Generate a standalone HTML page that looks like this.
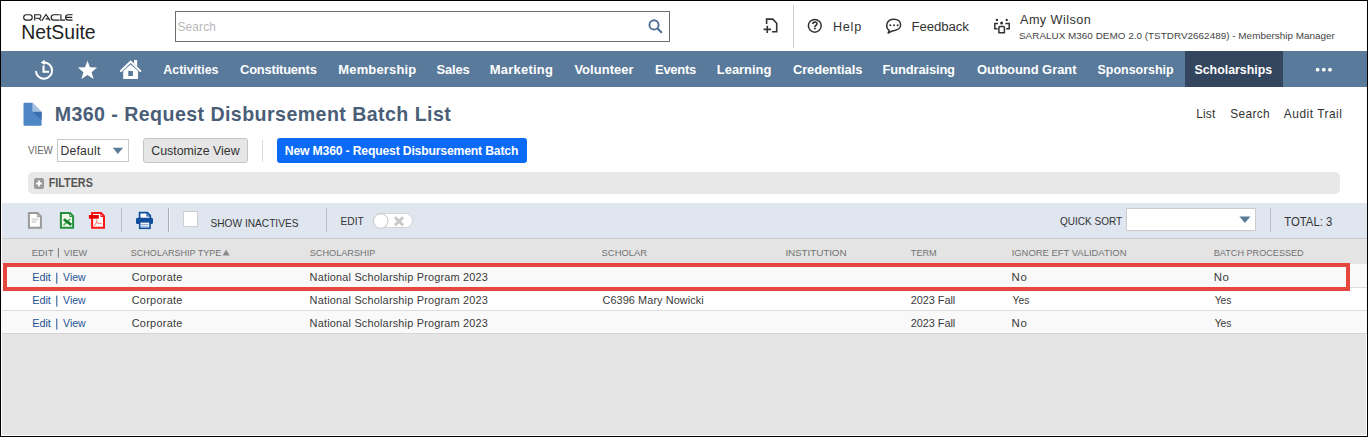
<!DOCTYPE html>
<html><head><meta charset="utf-8">
<style>
html,body{margin:0;padding:0}
body{width:1368px;height:437px;overflow:hidden;position:relative;background:#fff;font-family:"Liberation Sans",sans-serif}
.b{position:absolute;box-sizing:border-box}
svg{position:absolute;left:0;top:0}
svg text{font-family:"Liberation Sans",sans-serif}
</style></head><body>
<!-- frame -->
<div class="b" style="left:0;top:0;width:1368px;height:437px;border:1px solid #000;border-right-width:1px;border-bottom-width:1px;background:#fff"></div>
<!-- search box -->
<div class="b" style="left:175px;top:11px;width:495px;height:31px;border:1px solid #6f6f6f;background:#fff"></div>
<div class="b" style="left:793px;top:5px;width:1px;height:43px;background:#cfcfcf"></div>
<!-- nav -->
<div class="b" style="left:1px;top:51px;width:1366px;height:36px;background:#597a9b"></div>
<div class="b" style="left:1185px;top:51px;width:98px;height:36px;background:#34465d"></div>
<!-- view row -->
<div class="b" style="left:57px;top:139px;width:72px;height:23px;border:1px solid #c9c9c9;background:#fff"></div>
<div class="b" style="left:143px;top:138px;width:105px;height:25px;border:1px solid #c4c4c4;border-radius:3px;background:#e6e6e6"></div>
<div class="b" style="left:262px;top:140px;width:1px;height:22px;background:#dcdcdc"></div>
<div class="b" style="left:277px;top:138px;width:250px;height:25px;border-radius:3px;background:#0b6bf7"></div>
<!-- filters -->
<div class="b" style="left:28px;top:172px;width:1312px;height:22px;border-radius:5px;background:#e8e8e8"></div>
<!-- toolbar -->
<div class="b" style="left:2px;top:203px;width:1365px;height:35px;background:#dfe6ef"></div>
<div class="b" style="left:2px;top:238px;width:1365px;height:1px;background:#c8cacd"></div>
<div class="b" style="left:121px;top:208px;width:1px;height:24px;background:#b9bec5"></div>
<div class="b" style="left:168px;top:208px;width:1px;height:24px;background:#a6acb4"></div>
<div class="b" style="left:169px;top:208px;width:1px;height:24px;background:#f4f6f9"></div>
<div class="b" style="left:183px;top:211px;width:15px;height:16px;border:1px solid #cfcfcf;background:#fff"></div>
<div class="b" style="left:326px;top:208px;width:1px;height:24px;background:#b9bec5"></div>
<div class="b" style="left:373px;top:213px;width:40px;height:15px;border:1px solid #d4d4d4;border-radius:8px;background:#fff"></div>
<div class="b" style="left:1126px;top:208px;width:130px;height:23px;border:1px solid #cccccc;background:#fff"></div>
<div class="b" style="left:1270px;top:208px;width:1px;height:24px;background:#b9bec5"></div>
<!-- list -->
<div class="b" style="left:2px;top:239px;width:1365px;height:25px;background:#e4e4e4"></div>
<div class="b" style="left:2px;top:264px;width:1365px;height:23px;background:#f9f9f9"></div>
<div class="b" style="left:2px;top:287px;width:1365px;height:1px;background:#dddddd"></div>
<div class="b" style="left:2px;top:288px;width:1365px;height:22px;background:#ffffff"></div>
<div class="b" style="left:2px;top:310px;width:1365px;height:1px;background:#dddddd"></div>
<div class="b" style="left:2px;top:311px;width:1365px;height:22px;background:#f9f9f9"></div>
<div class="b" style="left:2px;top:333px;width:1365px;height:1px;background:#d6d6d6"></div>
<div class="b" style="left:2px;top:334px;width:1364px;height:101px;background:#e5e5e5"></div>
<div class="b" style="left:3px;top:263px;width:1347px;height:28px;border:4px solid #e5473f"></div>
<!-- right/bottom black edge -->
<div class="b" style="left:1367px;top:0;width:1px;height:437px;background:#000"></div>
<div class="b" style="left:0;top:436px;width:1368px;height:1px;background:#000"></div>

<svg width="1368" height="437">
<!-- ORACLE logo -->
<g fill="none" stroke="#222" stroke-width="1.15">
 <rect x="23.7" y="14.7" width="8.5" height="5.4" rx="2.7"/>
 <path d="M34.7 20.6 V14.7 H39.2 A1.75 1.75 0 0 1 39.2 18.2 H35.5 M38.6 18.2 L41.2 20.6"/>
 <path d="M41.9 20.6 L46 14.5 L50.1 20.6 M45.6 18.9 H48.6"/>
 <path d="M59.7 14.7 H53.9 A2.7 2.7 0 0 0 53.9 20.1 H59.7"/>
 <path d="M60.9 14.2 V20.1 H65"/>
 <path d="M72.6 14.7 H68.3 A2.7 2.7 0 0 0 68.3 20.1 H72.6 M66.2 17.4 H72.2"/>
</g>
<!-- magnifier -->
<g fill="none" stroke="#4d6f94" stroke-linecap="round">
 <circle cx="654" cy="24.9" r="4.6" stroke-width="1.9"/>
 <path d="M657.6 28.5 L661.3 32.2" stroke-width="2.1"/>
</g>
<!-- new doc -->
<g fill="none" stroke="#333" stroke-width="1.6">
 <path d="M766.6 24 V19.1 H772.8 L776.7 23.2 V31.7 H772"/>
 <path d="M763.6 29.4 H771 M767.3 25.8 V33"/>
</g>
<!-- help -->
<circle cx="814.8" cy="25.8" r="6.4" fill="none" stroke="#333" stroke-width="1.5"/>
<path d="M812.9 24 C812.9 21.6 817 21.4 817 23.7 C817 25.3 814.9 25.4 814.9 26.9" fill="none" stroke="#333" stroke-width="1.6"/><circle cx="814.9" cy="28.5" r="1" fill="#333"/>
<!-- feedback -->
<g fill="none" stroke="#333" stroke-width="1.5" stroke-linejoin="round">
 <path d="M889.2 30.3 C885.2 27.5 885.8 19.2 894 19.2 C902.5 19.2 903 29.6 894.5 30.4 C892.5 30.6 891 31.2 888.2 33 Z"/>
</g>
<g fill="#333"><circle cx="890.3" cy="25.2" r="1"/><circle cx="894" cy="25.2" r="1"/><circle cx="897.7" cy="25.2" r="1"/></g>
<!-- users -->
<g fill="#333"><circle cx="996.9" cy="19.9" r="1.2"/><circle cx="1006.7" cy="19.9" r="1.2"/><circle cx="1001.6" cy="23.1" r="1.5"/></g>
<g fill="none" stroke="#333" stroke-width="1.5">
 <path d="M998 23.6 H994.8 V28.7 H997.6"/><path d="M1005.4 23.6 H1009.2 V28.7 H1006.2"/>
 <path d="M998.9 27.2 L999.9 26.4 H1003.4 L1004.4 27.2 V32.8 H998.9 Z"/>
</g>
<!-- nav icons -->
<g fill="none" stroke="#fff" stroke-width="2">
 <path d="M35.9 71.2 A8.1 8.1 0 1 0 43.6 62.5"/>
 <path d="M43.5 65.5 V71.7 H49.1" stroke-width="2.1"/>
</g>
<path d="M40.6 62.4 L44.9 59.8 L44.9 65 Z" fill="#fff"/>
<path d="M87.5 60.7 L90 67.3 L97.1 67.6 L91.6 72.2 L93.6 78.9 L87.5 75.1 L81.4 78.9 L83.4 72.2 L77.9 67.6 L85 67.3 Z" fill="#fff"/>
<g fill="#fff">
 <path fill-rule="evenodd" d="M123.2 79 V70.9 L130.6 64.4 L138 70.9 V79 Z M128.3 71 H132.9 V75.9 H128.3 Z"/>
 <path d="M134 60.1 H137.2 V66.5 L134 63.4 Z"/>
</g>
<path d="M120.9 71 L130.6 61.6 L140.3 71" fill="none" stroke="#fff" stroke-width="2" stroke-linecap="round"/>
<g fill="#fff"><circle cx="1317.6" cy="69.7" r="1.9"/><circle cx="1323.8" cy="69.7" r="1.9"/><circle cx="1330" cy="69.7" r="1.9"/></g>
<!-- title doc icon -->
<path d="M24.5 102.8 H32.4 L41.6 112 V124.8 Q41.6 125.8 40.6 125.8 H24.5 Q23.5 125.8 23.5 124.8 V103.8 Q23.5 102.8 24.5 102.8 Z" fill="#4f86c6"/>
<path d="M32.4 111.7 H41.6 V120 Z" fill="#3d6fae"/>
<path d="M32.4 102.8 V111.7 H41.6 Z" fill="#a6c0e2"/>
<!-- view dropdown arrow -->
<path d="M112.8 147.8 H123 L117.9 153.9 Z" fill="#5b7a98"/>
<!-- filters plus -->
<rect x="34" y="178" width="10" height="11" rx="2" fill="#9a9a9a"/>
<path d="M36.2 183.5 H41.8 M39 180.6 V186.4" stroke="#fff" stroke-width="1.8"/>
<!-- toolbar icons -->
<g stroke-width="2" stroke-linejoin="miter">
 <path d="M28.9 212.9 H37.5 L40.9 216.4 V227.8 H28.9 Z" fill="#fff" stroke="#9a9a9a"/>
 <path d="M37.3 213.5 V216.7 H40.4 Z" fill="#f2f2f2" stroke="#9a9a9a" stroke-width="1"/>
 <path d="M31.6 219.4 H38 M31.6 222 H36.2" stroke="#dcdcdc" stroke-width="2.2"/>
 <path d="M60.9 212.9 H70 L73.1 216.2 V227.8 H60.9 Z" fill="#eff8e9" stroke="#25903f"/>
 <path d="M69.8 213.5 V216.5 H72.6 Z" fill="#fff" stroke="#25903f" stroke-width="1"/>
 <path d="M70.3 219 L63.6 225.2" stroke="#4cb55a" stroke-width="1.7"/>
 <path d="M63.8 219.2 L71.3 224.9" stroke="#137a2c" stroke-width="2.6"/>
 <path d="M92.1 212.9 H101 L104 216.2 V227.8 H92.1 Z" fill="#fff" stroke="#ff1414"/>
 <path d="M100.8 213.5 V216.5 H103.5 Z" fill="#fff" stroke="#ff1414" stroke-width="1"/>
 <rect x="88.9" y="215" width="9.9" height="3.7" fill="#e80000" stroke="none"/>
 <path d="M96.8 219.5 C97.3 222 95.5 224.6 93.8 226 M97 223 C98.5 223.3 100.2 223.2 101.6 223.5" fill="none" stroke="#ff5050" stroke-width="0.9"/>
</g>
<g>
 <path d="M139.6 212.7 H147.4 L150.3 215.6 V219 H139.6 Z" fill="#fff" stroke="#0f4d9d" stroke-width="1.7"/><path d="M147 213 V216 H150" fill="none" stroke="#0f4d9d" stroke-width="1.2"/>
 <rect x="136" y="217.8" width="17" height="6.3" rx="1.5" fill="#0f4d9d"/>
 <rect x="139.7" y="221.8" width="10.3" height="6.5" fill="#fff" stroke="#0f4d9d" stroke-width="1.6"/>
 <path d="M141 224.4 H148.5 M141 226.3 H148.5" stroke="#6a8fc2" stroke-width="0.8"/>
</g>
<!-- toggle -->
<circle cx="380.7" cy="221" r="7.3" fill="#fff" stroke="#c6c6c6" stroke-width="1"/>
<path d="M395 217.3 L403 225.3 M403 217.3 L395 225.3" stroke="#c8c8c8" stroke-width="3"/>
<!-- quick sort arrow -->
<path d="M1239.4 216.6 H1250.4 L1244.9 223 Z" fill="#5b7a98"/>
<!-- header sort arrow -->
<path d="M222.6 255.6 L226.1 249.6 L229.6 255.6 Z" fill="#8a8a8a"/>
<path d="M56.8 295.6 V306.6 M56.8 272.7 V283.7 M56.8 318.6 V329.6" stroke="#1f5394" stroke-width="1"/>
<path d="M58.4 248.2 V257.6" stroke="#777" stroke-width="1"/>
<text transform="translate(21.14 39.0) scale(0.9286 1)" font-weight="normal" font-size="20.93" fill="#1f1f1f">NetSuite</text>
<text x="177.40" y="30.7" font-weight="normal" font-size="11.92" letter-spacing="0.160" fill="#b9b9b9">Search</text>
<text x="833.00" y="30.7" font-weight="normal" font-size="12.65" letter-spacing="0.733" fill="#333333">Help</text>
<text x="911.40" y="31.1" font-weight="normal" font-size="13.23" letter-spacing="-0.071" fill="#333333">Feedback</text>
<text x="1020.00" y="24.0" font-weight="normal" font-size="12.65" letter-spacing="0.444" fill="#333333">Amy Wilson</text>
<text x="1019.00" y="39.0" font-weight="normal" font-size="9.88" letter-spacing="0.028" fill="#444444">SARALUX M360 DEMO 2.0 (TSTDRV2662489) - Membership Manager</text>
<text transform="translate(163.30 74.1) scale(0.9596 1)" font-weight="bold" font-size="12.94" fill="#ffffff">Activities</text>
<text x="240.00" y="74.1" font-weight="bold" font-size="12.94" letter-spacing="-0.200" fill="#ffffff">Constituents</text>
<text x="338.30" y="74.1" font-weight="bold" font-size="12.94" letter-spacing="0.189" fill="#ffffff">Membership</text>
<text x="436.50" y="74.1" font-weight="bold" font-size="12.94" letter-spacing="-0.150" fill="#ffffff">Sales</text>
<text x="489.80" y="74.1" font-weight="bold" font-size="12.94" letter-spacing="0.250" fill="#ffffff">Marketing</text>
<text x="574.40" y="74.1" font-weight="bold" font-size="12.94" letter-spacing="0.062" fill="#ffffff">Volunteer</text>
<text x="655.00" y="74.1" font-weight="bold" font-size="12.94" letter-spacing="-0.240" fill="#ffffff">Events</text>
<text x="716.80" y="74.1" font-weight="bold" font-size="12.94" letter-spacing="0.000" fill="#ffffff">Learning</text>
<text x="792.90" y="74.1" font-weight="bold" font-size="12.94" letter-spacing="-0.100" fill="#ffffff">Credentials</text>
<text x="882.60" y="74.1" font-weight="bold" font-size="12.94" letter-spacing="-0.160" fill="#ffffff">Fundraising</text>
<text x="977.00" y="74.1" font-weight="bold" font-size="12.94" letter-spacing="-0.031" fill="#ffffff">Outbound Grant</text>
<text transform="translate(1097.54 74.1) scale(0.9641 1)" font-weight="bold" font-size="12.94" fill="#ffffff">Sponsorship</text>
<text transform="translate(1194.44 74.1) scale(0.9575 1)" font-weight="bold" font-size="12.94" fill="#ffffff">Scholarships</text>
<text x="54.70" y="121.0" font-weight="bold" font-size="19.62" letter-spacing="0.427" fill="#4a5e78">M360 - Request Disbursement Batch List</text>
<text x="1196.20" y="118.0" font-weight="normal" font-size="11.92" letter-spacing="0.200" fill="#333333">List</text>
<text x="1230.20" y="118.0" font-weight="normal" font-size="11.92" letter-spacing="0.340" fill="#333333">Search</text>
<text x="1283.80" y="118.0" font-weight="normal" font-size="11.92" letter-spacing="0.520" fill="#333333">Audit Trail</text>
<text transform="translate(28.00 154.3) scale(0.8893 1)" font-weight="normal" font-size="10.9" fill="#666666">VIEW</text>
<text x="60.40" y="155.2" font-weight="normal" font-size="12.21" letter-spacing="0.233" fill="#333333">Default</text>
<text transform="translate(151.20 155.4) scale(0.9570 1)" font-weight="normal" font-size="12.94" fill="#333333">Customize View</text>
<text x="284.80" y="154.7" font-weight="bold" font-size="12.21" letter-spacing="-0.181" fill="#ffffff">New M360 - Request Disbursement Batch</text>
<text transform="translate(48.67 186.8) scale(0.8346 1)" font-weight="bold" font-size="12.94" fill="#555555">FILTERS</text>
<text transform="translate(210.53 227.0) scale(0.8730 1)" font-weight="normal" font-size="11.63" fill="#333333">SHOW INACTIVES</text>
<text transform="translate(340.46 224.9) scale(0.9375 1)" font-weight="normal" font-size="10.9" fill="#333333">EDIT</text>
<text transform="translate(1059.90 224.9) scale(0.8871 1)" font-weight="normal" font-size="11.34" fill="#333333">QUICK SORT</text>
<text transform="translate(1284.30 225.9) scale(0.9057 1)" font-weight="normal" font-size="12.5" fill="#333333">TOTAL: 3</text>
<text transform="translate(31.73 256.1) scale(0.9667 1)" font-weight="normal" font-size="9.88" fill="#727272">EDIT</text>
<text transform="translate(63.80 256.1) scale(0.9240 1)" font-weight="normal" font-size="9.88" fill="#727272">VIEW</text>
<text transform="translate(130.78 256.1) scale(0.9153 1)" font-weight="normal" font-size="9.88" fill="#727272">SCHOLARSHIP TYPE</text>
<text transform="translate(309.67 256.1) scale(0.9286 1)" font-weight="normal" font-size="9.88" fill="#727272">SCHOLARSHIP</text>
<text transform="translate(601.55 256.1) scale(0.9543 1)" font-weight="normal" font-size="9.88" fill="#727272">SCHOLAR</text>
<text x="785.40" y="256.1" font-weight="normal" font-size="9.88" letter-spacing="-0.080" fill="#727272">INSTITUTION</text>
<text transform="translate(910.80 256.1) scale(0.9259 1)" font-weight="normal" font-size="9.88" fill="#727272">TERM</text>
<text transform="translate(1011.64 256.1) scale(0.9563 1)" font-weight="normal" font-size="9.88" fill="#727272">IGNORE EFT VALIDATION</text>
<text transform="translate(1213.78 256.1) scale(0.9219 1)" font-weight="normal" font-size="9.88" fill="#727272">BATCH PROCESSED</text>
<text x="32.20" y="281.1" font-weight="normal" font-size="10.9" letter-spacing="-0.033" fill="#1f5394">Edit</text>
<text transform="translate(63.10 281.1) scale(0.9625 1)" font-weight="normal" font-size="10.9" fill="#1f5394">View</text>
<text x="131.70" y="281.1" font-weight="normal" font-size="10.9" letter-spacing="0.288" fill="#3a3a3a">Corporate</text>
<text x="309.60" y="281.1" font-weight="normal" font-size="10.9" letter-spacing="0.200" fill="#3a3a3a">National Scholarship Program 2023</text>
<text transform="translate(1011.55 281.1) scale(1.0488 1)" font-weight="normal" font-size="10.9" letter-spacing="0.635" fill="#3a3a3a">No</text>
<text transform="translate(1213.65 281.1) scale(1.0488 1)" font-weight="normal" font-size="10.9" letter-spacing="0.635" fill="#3a3a3a">No</text>
<text x="32.20" y="304.0" font-weight="normal" font-size="10.9" letter-spacing="-0.033" fill="#1f5394">Edit</text>
<text transform="translate(63.10 304.0) scale(0.9625 1)" font-weight="normal" font-size="10.9" fill="#1f5394">View</text>
<text x="131.70" y="304.0" font-weight="normal" font-size="10.9" letter-spacing="0.288" fill="#3a3a3a">Corporate</text>
<text x="309.60" y="304.0" font-weight="normal" font-size="10.9" letter-spacing="0.200" fill="#3a3a3a">National Scholarship Program 2023</text>
<text x="602.50" y="304.0" font-weight="normal" font-size="10.9" letter-spacing="0.082" fill="#3a3a3a">C6396 Mary Nowicki</text>
<text x="910.80" y="304.0" font-weight="normal" font-size="10.9" letter-spacing="-0.050" fill="#3a3a3a">2023 Fall</text>
<text transform="translate(1012.60 304.0) scale(0.9444 1)" font-weight="normal" font-size="10.9" fill="#3a3a3a">Yes</text>
<text transform="translate(1214.70 304.0) scale(0.9444 1)" font-weight="normal" font-size="10.9" fill="#3a3a3a">Yes</text>
<text x="32.20" y="327.0" font-weight="normal" font-size="10.9" letter-spacing="-0.033" fill="#1f5394">Edit</text>
<text transform="translate(63.10 327.0) scale(0.9625 1)" font-weight="normal" font-size="10.9" fill="#1f5394">View</text>
<text x="131.70" y="327.0" font-weight="normal" font-size="10.9" letter-spacing="0.288" fill="#3a3a3a">Corporate</text>
<text x="309.60" y="327.0" font-weight="normal" font-size="10.9" letter-spacing="0.200" fill="#3a3a3a">National Scholarship Program 2023</text>
<text x="910.80" y="327.0" font-weight="normal" font-size="10.9" letter-spacing="-0.050" fill="#3a3a3a">2023 Fall</text>
<text transform="translate(1011.55 327.0) scale(1.0488 1)" font-weight="normal" font-size="10.9" letter-spacing="0.635" fill="#3a3a3a">No</text>
<text transform="translate(1214.70 327.0) scale(0.9444 1)" font-weight="normal" font-size="10.9" fill="#3a3a3a">Yes</text>
</svg>
</body></html>
